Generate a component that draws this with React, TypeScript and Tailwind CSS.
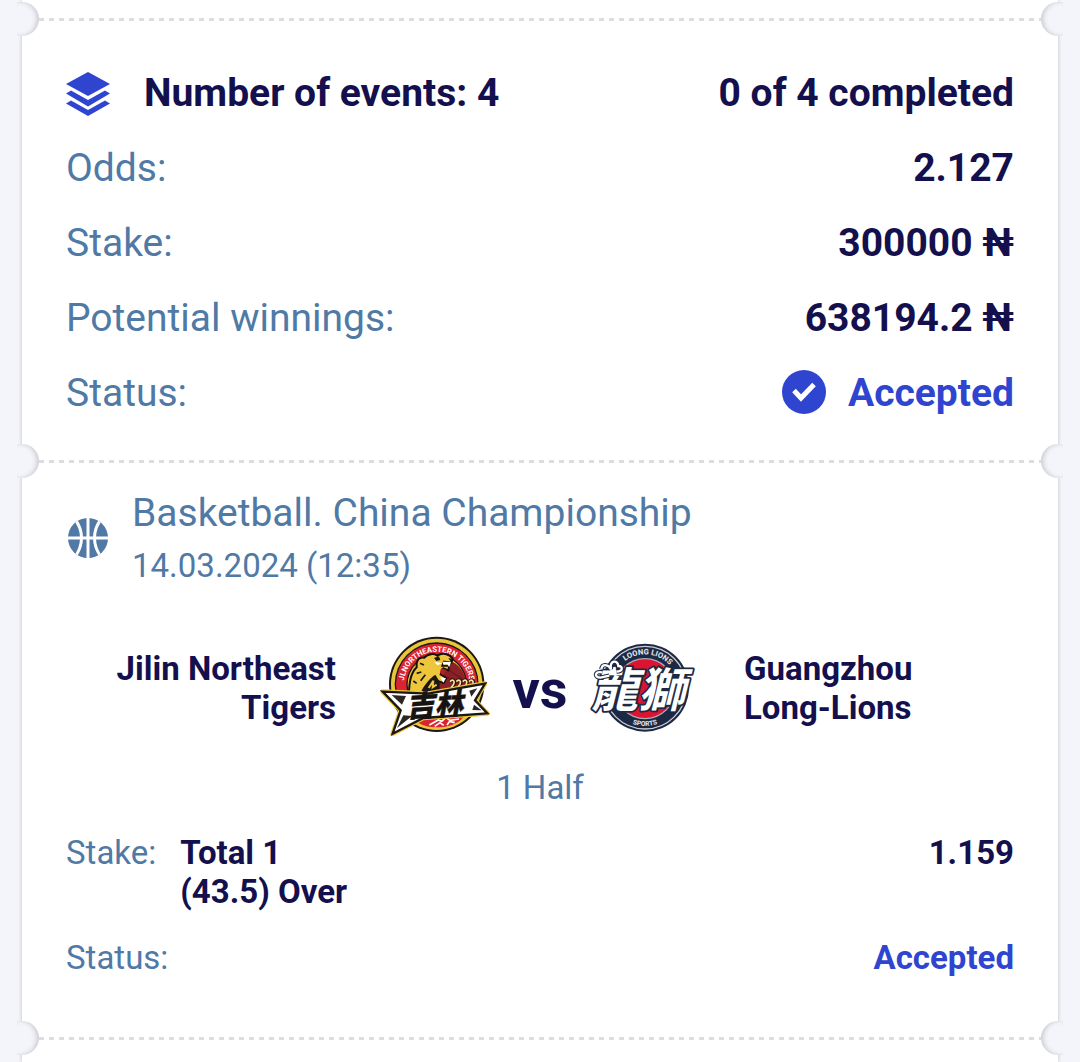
import type { ReactNode } from "react";

function LayersIcon() {
  return (
    <svg viewBox="0 0 44 44" className="h-11 w-11 shrink-0" fill="#2f45cf" aria-hidden="true">
      <path d="M22 0 L44 12 L22 24 L0 12 Z" />
      <path d="M0 21.500 L5 18.500 L22 28 L39 18.500 L44 21.500 L22 34.500 Z" />
      <path d="M0 31.500 L5 28.500 L22 38 L39 28.500 L44 31.500 L22 44 Z" />
    </svg>
  );
}

function BasketballIcon() {
  return (
    <svg viewBox="0 0 42 42" className="h-[42px] w-[42px]" aria-hidden="true">
      <clipPath id="ball">
        <circle cx="22" cy="21" r="20" />
      </clipPath>
      <g clipPath="url(#ball)">
        <rect width="44" height="42" fill="#5079a6" />
        <g fill="none" stroke="#fff" strokeWidth="3">
          <path d="M22 0 V42 M0 21 H44" />
          <path d="M8 1 C18 13 18 29 8 41 M36 1 C26 13 26 29 36 41" />
        </g>
      </g>
    </svg>
  );
}

function CheckIcon() {
  return (
    <svg viewBox="0 0 44 44" className="h-11 w-11" aria-hidden="true">
      <circle cx="22" cy="22" r="22" fill="#2f45cf" />
      <path d="M12 20.500 L19 28 L32 14.500" fill="none" stroke="#fff" strokeWidth="5" />
    </svg>
  );
}

function TigersLogo() {
  return (
    <svg viewBox="0 6 390 360" className="h-[120px] w-[130px]" role="img" aria-label="Jilin Northeast Tigers">
      <circle cx="200" cy="175" r="143" fill="#1d1714" />
      <circle cx="200" cy="175" r="137" fill="#e8c63a" />
      <circle cx="200" cy="175" r="126" fill="#1d1714" />
      <circle cx="200" cy="175" r="122" fill="#dc2431" />
      <circle cx="200" cy="175" r="91" fill="#1d1714" />
      <circle cx="200" cy="175" r="87" fill="#e8c63a" />
      <path id="tigersArc" d="M103 196 A99 99 0 1 1 297 196" fill="none" />
      <text fontFamily="Roboto" fontSize="23" fontWeight="700" fill="#fff">
        <textPath href="#tigersArc" startOffset="50%" textAnchor="middle">JLNORTHEASTERN TIGERS</textPath>
      </text>
      <path d="M236 105 C272 112 292 150 289 195 L200 195 L216 150 Z" fill="#8c2027" />
      <path d="M240 135 L278 160 M235 155 L270 178" stroke="#6b181e" strokeWidth="4" />
      <path d="M117 204 C117 165 124 139 140 124 C138 103 147 92 163 95 C174 82 193 82 202 89 C217 78 238 83 248 98 L244 110 L222 107 L217 119 L238 119 L235 133 L220 127 L212 145 L229 156 L221 171 L206 166 L205 204 Z" fill="#edc63c" stroke="#16120f" strokeWidth="6" />
      <path d="M150 204 C160 180 176 160 196 146 L208 166 L206 204 Z" fill="#1d1714" />
      <path d="M150 112 L162 117 M140 142 L154 138 M130 165 L140 172 M166 146 L152 164" fill="none" stroke="#1d1714" strokeWidth="5" />
      <path d="M176 186 L190 164 L188 184 L200 176" fill="none" stroke="#edc63c" strokeWidth="6" />
      <path d="M193 107 L216 112 L202 118 Z M218 107 L243 108 L238 123 L231 115 L220 116 Z M210 153 L228 157 L220 170 Z" fill="#fff" />
      <path d="M213 127 L230 132 L217 147 L210 139 Z" fill="#b51f2b" />
      <path d="M192 96 L207 91 L211 102 L199 105 Z M235 97 L248 98 L243 107 Z" fill="#1d1714" />
      {[240, 259, 278, 297].map((x) => (
        <path key={x} d={`M${x} 167 q8 -10 13 -1 q3 9 -10 20 l12 -2`} fill="none" stroke="#1d1714" strokeWidth="10" />
      ))}
      {[240, 259, 278, 297].map((x) => (
        <path key={x} d={`M${x} 167 q8 -9 12 -1 q2 8 -9 18`} fill="none" stroke="#f5e49a" strokeWidth="5" />
      ))}
      <path d="M155 277 L285 266 C268 294 236 304 200 304 C178 304 159 299 145 290 Z" fill="#dc2431" />
      <path d="M178 297 L205 282 L215 286 L228 274 L240 283 L267 279 M194 301 L210 290 L221 298 M231 297 L239 286 L254 290" fill="none" stroke="#fff" strokeWidth="5" />
      <path d="M38 197 L174 203 L345 173 L315 223 L352 262 L160 276 L68 323 L92 253 Z" fill="#1d1714" stroke="#edc63c" strokeWidth="14" strokeLinejoin="round" />
      <path d="M38 197 L174 203 L345 173 L315 223 L352 262 L160 276 L68 323 L92 253 Z" fill="#fff" stroke="#1d1714" strokeWidth="7" />
      <path d="M65 207 L108 210 L96 236 Z M81 306 L100 268 L126 270 Z M322 187 L304 212 L298 194 Z M335 253 L307 252 L312 236 Z" fill="#2d2724" />
      <text x="107" y="268" fontFamily="Noto Sans CJK SC" fontSize="86" fontWeight="900" fontStyle="italic" fill="#171310" stroke="#171310" strokeWidth="1" transform="rotate(-4 200 235)">
        吉林
      </text>
    </svg>
  );
}

function LionsLogo() {
  return (
    <svg viewBox="0 6 390 345" className="h-[115px] w-[130px]" role="img" aria-label="Guangzhou Long-Lions">
      <circle cx="195" cy="176" r="132" fill="#1d2842" />
      <circle cx="195" cy="176" r="124" fill="none" stroke="#c9ced8" strokeWidth="4" />
      <circle cx="195" cy="179" r="92" fill="#a8adba" />
      <circle cx="195" cy="179" r="88" fill="#dc1431" />
      <path id="lionsTop" d="M95 176 A100 100 0 0 1 295 176" fill="none" />
      <path id="lionsBottom" d="M80 176 A115 115 0 0 0 310 176" fill="none" />
      <text fontFamily="Roboto" fontSize="23" fontWeight="800" fill="#dfe2e9">
        <textPath href="#lionsTop" startOffset="53%" textAnchor="middle">LOONG LIONS</textPath>
      </text>
      <text fontFamily="Roboto" fontSize="20" fontWeight="800" fill="#dfe2e9">
        <textPath href="#lionsBottom" startOffset="50%" textAnchor="middle">SPORTS</textPath>
      </text>
      <text
        x="33"
        y="235"
        fontFamily="Noto Sans CJK TC"
        fontSize="141"
        fontWeight="700"
        fontStyle="italic"
        fill="#fff"
        stroke="#1d2842"
        strokeWidth="11"
        strokeLinejoin="round"
        paintOrder="stroke"
      >
        龍獅
      </text>
      <path d="M67 130 C43 126 42 146 61 146 L88 140 M64 121 C66 103 85 106 93 121 C88 93 113 91 115 111 C131 111 128 128 110 128" fill="none" stroke="#1d2842" strokeWidth="13" />
      <path d="M67 130 C43 126 42 146 61 146 L88 140 M64 121 C66 103 85 106 93 121 C88 93 113 91 115 111 C131 111 128 128 110 128" fill="none" stroke="#fff" strokeWidth="7" />
    </svg>
  );
}

function Divider() {
  return (
    <div className="-mx-[5px] flex items-center" role="separator">
      <div className="h-[34px] w-[22px] rounded-r-[17px] bg-[#f4f5fa] shadow-[inset_-3px_0_5px_-1px_#c8c9ce]" />
      <div className="h-[3px] flex-1 bg-[repeating-linear-gradient(90deg,#dcdce1_0_5px,transparent_5px_10px)]" />
      <div className="h-[34px] w-[22px] rounded-l-[17px] bg-[#f4f5fa] shadow-[inset_3px_0_5px_-1px_#c8c9ce]" />
    </div>
  );
}

function SummaryRow({ label, children }: { label: string; children: ReactNode }) {
  return (
    <div className="flex items-center justify-between">
      <dt className="text-[#5079a6]">{label}</dt>
      <dd className="flex items-center font-bold">{children}</dd>
    </div>
  );
}

export default function App() {
  return (
    <main className="min-h-screen overflow-hidden bg-[#f4f5fa] px-[22px] font-[Roboto,sans-serif] text-[#14104e]">
      <article className="min-h-screen bg-white pt-0.5 shadow-[0_0_4px_#c0c1c8]">
        <Divider />

        <section className="px-11 pt-[34px] pb-[27px] text-[39px] leading-[47px]">
          <div className="flex items-center justify-between font-bold">
            <h2 className="flex items-center gap-[34px]">
              <LayersIcon />
              Number of events: 4
            </h2>
            <p>0 of 4 completed</p>
          </div>
          <dl className="mt-7 flex flex-col gap-7">
            <SummaryRow label="Odds:">2.127</SummaryRow>
            <SummaryRow label="Stake:">300000 ₦</SummaryRow>
            <SummaryRow label="Potential winnings:">638194.2 ₦</SummaryRow>
            <SummaryRow label="Status:">
              <span className="flex items-start gap-[22px] text-[#2f45cf]">
                <CheckIcon />
                Accepted
              </span>
            </SummaryRow>
          </dl>
        </section>

        <Divider />

        <section className="px-11 pt-3 pb-11 text-[33px] leading-[39px]">
          <header className="flex items-center gap-6 text-[#5079a6]">
            <BasketballIcon />
            <div>
              <h3 className="text-[39px] leading-[47px]">Basketball. China Championship</h3>
              <p className="mt-[9px] leading-[40px]">14.03.2024 (12:35)</p>
            </div>
          </header>

          <div className="mt-[42px] grid grid-cols-[1fr_auto_1fr] items-center gap-[34px] font-bold">
            <p className="pl-4 text-right">Jilin Northeast Tigers</p>
            <div className="flex items-center">
              <TigersLogo />
              <span className="w-20 pt-1 text-center text-[54px] leading-[56px]">vs</span>
              <LionsLogo />
            </div>
            <p className="pr-4">Guangzhou Long-Lions</p>
          </div>

          <p className="mt-5 text-center text-[#5079a6]">1 Half</p>

          <dl className="mt-[26px] flex flex-col gap-[27px]">
            <div className="flex gap-6">
              <dt className="text-[#5079a6]">Stake:</dt>
              <dd className="flex flex-1 justify-between font-bold">
                <span>
                  Total 1<br />
                  (43.5) Over
                </span>
                <span>1.159</span>
              </dd>
            </div>
            <div className="flex justify-between">
              <dt className="text-[#5079a6]">Status:</dt>
              <dd className="font-bold text-[#2f45cf]">Accepted</dd>
            </div>
          </dl>
        </section>

        <Divider />
      </article>
    </main>
  );
}
